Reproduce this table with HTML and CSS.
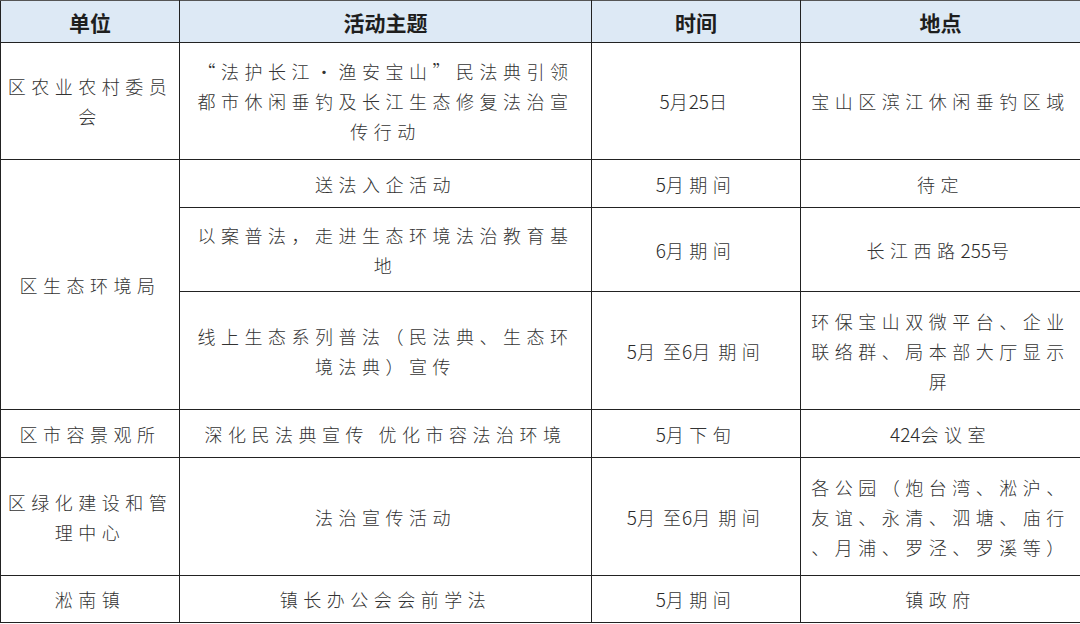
FILE: index.html
```html
<!DOCTYPE html>
<html lang="zh-CN">
<head>
<meta charset="utf-8">
<title>活动安排</title>
<link rel="stylesheet" href="styles.css">
</head>
<body>
<table class="plan">
  <colgroup>
    <col class="c-unit">
    <col class="c-topic">
    <col class="c-time">
    <col class="c-place">
  </colgroup>
  <thead>
    <tr class="r-head">
      <th>单位</th>
      <th>活动主题</th>
      <th>时间</th>
      <th>地点</th>
    </tr>
  </thead>
  <tbody>
    <tr class="r-117">
      <td>区农业农村委员<br>会</td>
      <td>“法护长江·渔安宝山”民法典引领<br>都市休闲垂钓及长江生态修复法治宣<br>传行动</td>
      <td><span class="num">5</span><span class="tight">月</span><span class="num">25</span>日</td>
      <td>宝山区滨江休闲垂钓区域</td>
    </tr>
    <tr class="r-48">
      <td rowspan="3">区生态环境局</td>
      <td>送法入企活动</td>
      <td><span class="num">5</span>月期间</td>
      <td>待定</td>
    </tr>
    <tr class="r-84">
      <td>以案普法，走进生态环境法治教育基<br>地</td>
      <td><span class="num">6</span>月期间</td>
      <td>长江西路<span class="num">255</span>号</td>
    </tr>
    <tr class="r-118">
      <td>线上生态系列普法（民法典、生态环<br>境法典）宣传</td>
      <td><span class="num">5</span><span class="wide">月</span><span class="tight">至</span><span class="num">6</span><span class="wide">月</span>期间</td>
      <td>环保宝山双微平台、企业<br>联络群、局本部大厅显示<br>屏</td>
    </tr>
    <tr class="r-48">
      <td>区市容景观所</td>
      <td>深化民法典宣传 优化市容法治环境</td>
      <td><span class="num">5</span>月下旬</td>
      <td><span class="num">424</span>会议室</td>
    </tr>
    <tr class="r-118">
      <td>区绿化建设和管<br>理中心</td>
      <td>法治宣传活动</td>
      <td><span class="num">5</span><span class="wide">月</span><span class="tight">至</span><span class="num">6</span><span class="wide">月</span>期间</td>
      <td>各公园（炮台湾、淞沪、<br>友谊、永清、泗塘、庙行<br>、月浦、罗泾、罗溪等）</td>
    </tr>
    <tr class="r-47">
      <td>淞南镇</td>
      <td>镇长办公会会前学法</td>
      <td><span class="num">5</span>月期间</td>
      <td>镇政府</td>
    </tr>
  </tbody>
</table>
</body>
</html>
```

FILE: styles.css
```css
html, body {
  margin: 0;
  padding: 0;
  background: #ffffff;
}

.plan {
  width: 1080px;
  table-layout: fixed;
  border-collapse: collapse;
  font-family: "Noto Sans CJK SC", "Noto Sans", sans-serif;
  color: #333333;
}

.c-unit { width: 179px; }
.c-topic { width: 412px; }
.c-time { width: 209px; }
.c-place { width: 280px; }

.plan th,
.plan td {
  border: 1px solid #222222;
  padding: 0 4px;
  text-align: center;
  vertical-align: middle;
  white-space: nowrap;
}

.plan th {
  background: #dde9f5;
  font-size: 21px;
  font-weight: 700;
  color: #1e1e1e;
  line-height: 28px;
  border-color: #555555 #222222 #222222 #222222;
}

.plan td {
  font-size: 18px;
  font-weight: 300;
  line-height: 30px;
  letter-spacing: 5.5px;
}

.num {
  font-weight: 300;
  letter-spacing: 0;
  font-size: 19px;
  color: #2a2a2a;
}

.tight {
  letter-spacing: 1px;
}

.wide {
  letter-spacing: 8px;
}

.r-head { height: 42px; }
.r-117 { height: 117px; }
.r-48 { height: 48px; }
.r-84 { height: 84px; }
.r-118 { height: 118px; }
.r-47 { height: 47px; }
```
